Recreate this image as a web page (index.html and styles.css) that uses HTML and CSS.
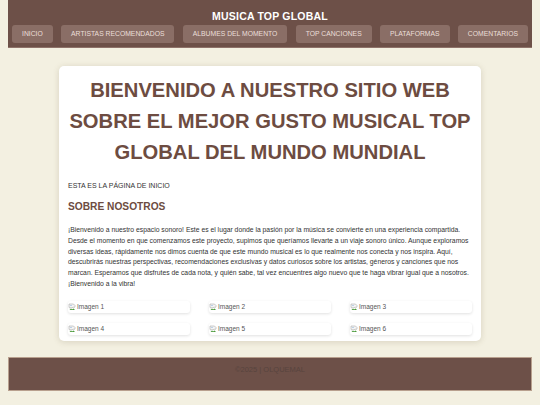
FILE: index.html
```html
<!DOCTYPE html>
<html lang="es">
<head>
<meta charset="utf-8">
<title>Musica Top Global</title>
<link rel="stylesheet" href="styles.css">
</head>
<body>
<header class="site-header">
  <div class="site-title">MUSICA TOP GLOBAL</div>
  <nav class="nav">
    <a class="nav-btn" href="#">INICIO</a>
    <a class="nav-btn" href="#">ARTISTAS RECOMENDADOS</a>
    <a class="nav-btn" href="#">ALBUMES DEL MOMENTO</a>
    <a class="nav-btn" href="#">TOP CANCIONES</a>
    <a class="nav-btn" href="#">PLATAFORMAS</a>
    <a class="nav-btn" href="#">COMENTARIOS</a>
  </nav>
</header>
<main class="card">
  <h1 class="headline">BIENVENIDO A NUESTRO SITIO WEB SOBRE EL MEJOR GUSTO MUSICAL TOP GLOBAL DEL MUNDO MUNDIAL</h1>
  <p class="intro">ESTA ES LA PÁGINA DE INICIO</p>
  <h2 class="section-title">SOBRE NOSOTROS</h2>
  <p class="text">¡Bienvenido a nuestro espacio sonoro! Este es el lugar donde la pasión por la música se convierte en una experiencia compartida. Desde el momento en que comenzamos este proyecto, supimos que queríamos llevarte a un viaje sonoro único. Aunque exploramos diversas ideas, rápidamente nos dimos cuenta de que este mundo musical es lo que realmente nos conecta y nos inspira. Aquí, descubrirás nuestras perspectivas, recomendaciones exclusivas y datos curiosos sobre los artistas, géneros y canciones que nos marcan. Esperamos que disfrutes de cada nota, y quién sabe, tal vez encuentres algo nuevo que te haga vibrar igual que a nosotros. ¡Bienvenido a la vibra!</p>
  <div class="gallery">
    <div class="thumb"><svg class="broken" viewBox="0 0 16 16"><path d="M2 2h9l3 3v3l-2 1-2-1-2 2-2-1-2 1-2-1z" fill="#f4f4f4" stroke="#9a9a9a" stroke-width="1"/><path d="M3 14l3-3 2 2 3-2 3 3z" fill="#4a9a3a"/><circle cx="6" cy="5" r="1.2" fill="#7aa7d8"/></svg><span>Imagen 1</span></div>
    <div class="thumb"><svg class="broken" viewBox="0 0 16 16"><path d="M2 2h9l3 3v3l-2 1-2-1-2 2-2-1-2 1-2-1z" fill="#f4f4f4" stroke="#9a9a9a" stroke-width="1"/><path d="M3 14l3-3 2 2 3-2 3 3z" fill="#4a9a3a"/><circle cx="6" cy="5" r="1.2" fill="#7aa7d8"/></svg><span>Imagen 2</span></div>
    <div class="thumb"><svg class="broken" viewBox="0 0 16 16"><path d="M2 2h9l3 3v3l-2 1-2-1-2 2-2-1-2 1-2-1z" fill="#f4f4f4" stroke="#9a9a9a" stroke-width="1"/><path d="M3 14l3-3 2 2 3-2 3 3z" fill="#4a9a3a"/><circle cx="6" cy="5" r="1.2" fill="#7aa7d8"/></svg><span>Imagen 3</span></div>
    <div class="thumb"><svg class="broken" viewBox="0 0 16 16"><path d="M2 2h9l3 3v3l-2 1-2-1-2 2-2-1-2 1-2-1z" fill="#f4f4f4" stroke="#9a9a9a" stroke-width="1"/><path d="M3 14l3-3 2 2 3-2 3 3z" fill="#4a9a3a"/><circle cx="6" cy="5" r="1.2" fill="#7aa7d8"/></svg><span>Imagen 4</span></div>
    <div class="thumb"><svg class="broken" viewBox="0 0 16 16"><path d="M2 2h9l3 3v3l-2 1-2-1-2 2-2-1-2 1-2-1z" fill="#f4f4f4" stroke="#9a9a9a" stroke-width="1"/><path d="M3 14l3-3 2 2 3-2 3 3z" fill="#4a9a3a"/><circle cx="6" cy="5" r="1.2" fill="#7aa7d8"/></svg><span>Imagen 5</span></div>
    <div class="thumb"><svg class="broken" viewBox="0 0 16 16"><path d="M2 2h9l3 3v3l-2 1-2-1-2 2-2-1-2 1-2-1z" fill="#f4f4f4" stroke="#9a9a9a" stroke-width="1"/><path d="M3 14l3-3 2 2 3-2 3 3z" fill="#4a9a3a"/><circle cx="6" cy="5" r="1.2" fill="#7aa7d8"/></svg><span>Imagen 6</span></div>
  </div>
</main>
<footer class="site-footer">©2025 | OLQUEMAL</footer>
</body>
</html>
```
FILE: styles.css
```css
* { box-sizing: border-box; }
html, body { margin: 0; padding: 0; }
body {
  background: #f3f0e1;
  font-family: "Liberation Sans", Arial, sans-serif;
  padding: 0 8px;
}
.site-header {
  background: #6d5048;
  border-bottom: 1px solid #8e7269;
  height: 48px;
  padding-top: 9px;
  display: flex;
  flex-direction: column;
  align-items: center;
}
.site-title {
  color: #ffffff;
  font-weight: bold;
  font-size: 10.5px;
  letter-spacing: 0.2px;
  line-height: 14px;
  margin-bottom: 2px;
}
.nav {
  display: flex;
  justify-content: space-between;
  width: 100%;
  padding: 0 4px;
}
.nav-btn {
  display: block;
  background: #8a6e66;
  color: #eadfd9;
  text-decoration: none;
  font-size: 6.8px;
  line-height: 18px;
  height: 18px;
  padding: 0 10px;
  border-radius: 3px;
  white-space: nowrap;
}
.card {
  display: block;
  width: 422px;
  margin: 18px auto 0;
  background: #ffffff;
  border-radius: 5px;
  box-shadow: 0 1px 6px rgba(90, 70, 40, 0.18);
  padding: 9px 9px 6px;
}
.headline {
  margin: 0 -4px;
  text-align: center;
  color: #6d4c41;
  font-size: 20.2px;
  line-height: 31px;
  font-weight: bold;
}
.intro {
  margin: 13px 0 0;
  font-size: 7px;
  line-height: 10px;
  color: #333;
}
.section-title {
  margin: 9px 0 0;
  font-size: 10.2px;
  line-height: 14px;
  color: #6d4c41;
  font-weight: bold;
}
.text {
  margin: 11px 0 0;
  font-size: 6.8px;
  line-height: 10.8px;
  color: #333;
}
.gallery {
  margin-top: 11px;
  display: grid;
  grid-template-columns: repeat(3, 122px);
  justify-content: space-between;
  row-gap: 10px;
}
.thumb {
  height: 12px;
  border-radius: 3px;
  box-shadow: 0 1px 3px rgba(0, 0, 0, 0.12);
  display: flex;
  align-items: center;
  font-size: 6.5px;
  color: #555;
  gap: 1px;
}
.broken { width: 8px; height: 8px; }
.site-footer {
  margin-top: 16px;
  background: #6d5048;
  border: 1px solid #b8a08e;
  height: 34px;
  padding-top: 7px;
  text-align: center;
  font-size: 7.5px;
  color: #58443e;
}
```
